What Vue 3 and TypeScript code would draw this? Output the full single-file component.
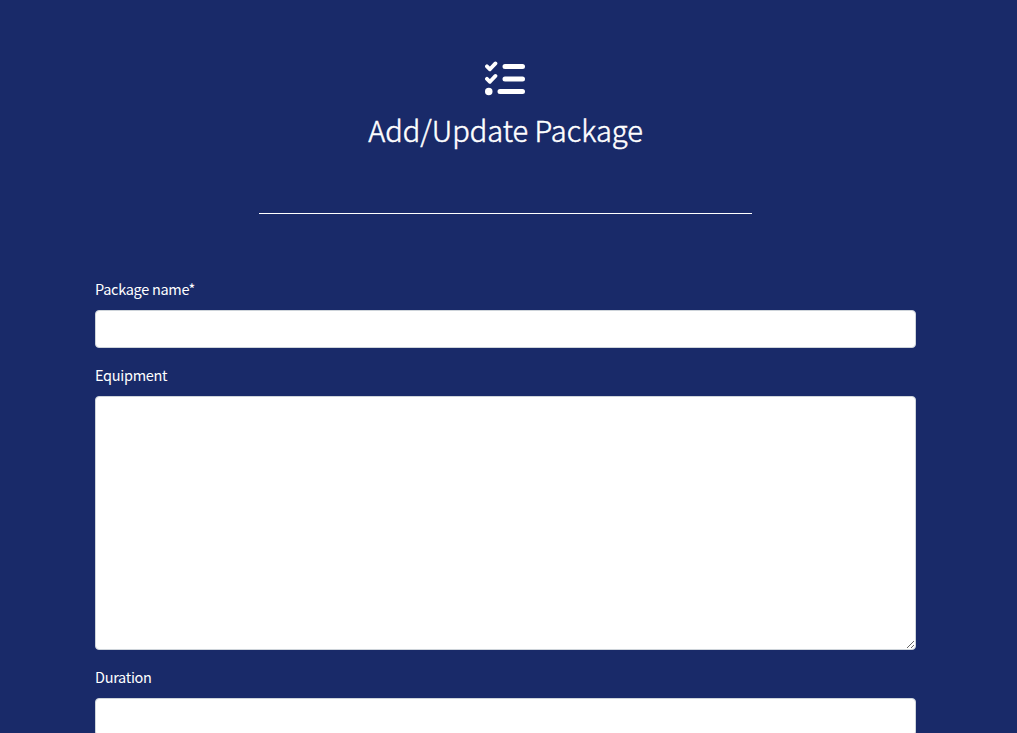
<script setup lang="ts">
import { ref } from 'vue'

const packageName = ref('')
const equipment = ref('')
const duration = ref('')
</script>

<template>
  <main class="page">
    <header class="intro">
      <svg class="icon" viewBox="0 0 512 512" aria-hidden="true">
        <g fill="none" stroke="currentColor" stroke-linecap="round" stroke-linejoin="round">
          <path stroke-width="48" d="M25 94 L63 132 L134 56 M25 254 L63 292 L134 216" />
          <path stroke-width="64" d="M256 96 H480 M256 256 H480 M192 416 H480" />
        </g>
        <circle cx="48" cy="416" r="48" fill="currentColor" />
      </svg>
      <h2 class="title">Add/Update Package</h2>
    </header>
    <hr class="rule" />
    <form class="form" @submit.prevent>
      <div class="field">
        <label for="package-name">Package name*</label>
        <input id="package-name" v-model="packageName" class="control" type="text" />
      </div>
      <div class="field">
        <label for="equipment">Equipment</label>
        <textarea id="equipment" v-model="equipment" class="control area"></textarea>
      </div>
      <div class="field">
        <label for="duration">Duration</label>
        <input id="duration" v-model="duration" class="control" type="text" />
      </div>
    </form>
  </main>
</template>

<style>
body {
  background: #192a69;
}
</style>

<style scoped>
.page {
  box-sizing: border-box;
  height: 100vh;
  overflow: hidden;
  padding: 58px 101px 0 95px;
  background: #192a69;
  color: #fff;
  font-family: "Noto Sans CJK SC", "Noto Sans", sans-serif;
}
.intro {
  display: flex;
  flex-direction: column;
  align-items: center;
}
.icon {
  display: block;
  width: 40px;
  height: 40px;
  margin: 1px 1px 0 0;
}
.title {
  margin: 12px 0 0;
  height: 38px;
  line-height: 37px;
  font-size: 29px;
  font-weight: 300;
  -webkit-text-stroke: 0.5px currentColor;
  white-space: nowrap;
}
.rule {
  width: 60%;
  height: 1px;
  margin: 64px auto 64px;
  border: 0;
  background: #fff;
}
.field {
  margin-bottom: 16px;
}
label {
  display: block;
  height: 24px;
  margin-bottom: 8px;
  line-height: 22px;
  font-size: 14.5px;
  letter-spacing: -0.3px;
}
.control {
  box-sizing: border-box;
  display: block;
  width: 100%;
  height: 38px;
  padding: 6px 12px;
  border: 1px solid #ced4da;
  border-radius: 4px;
  outline: none;
  background: #fff;
  color: #495057;
  font: inherit;
}
.area {
  height: 254px;
  overflow: auto;
  resize: vertical;
}
</style>
